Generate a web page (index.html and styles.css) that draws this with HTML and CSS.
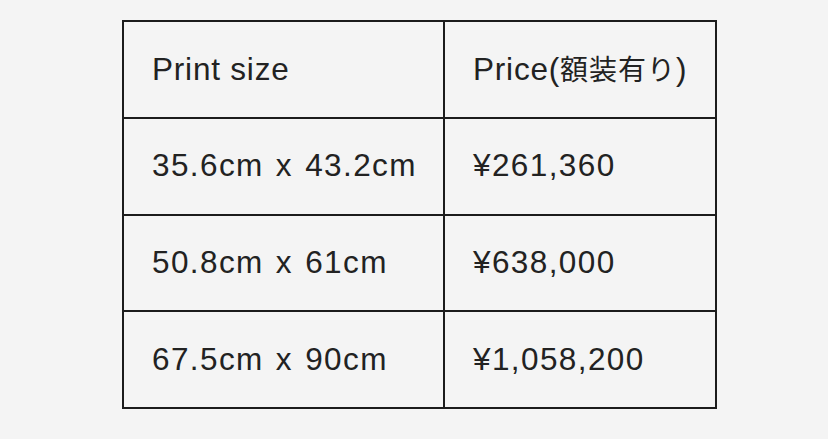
FILE: index.html
```html
<!DOCTYPE html>
<html lang="ja">
<head>
<meta charset="utf-8">
<title>Print sizes</title>
<link rel="stylesheet" href="styles.css">
</head>
<body>
<div class="wrap">
  <table class="price-table">
    <colgroup>
      <col class="col-size">
      <col class="col-price">
    </colgroup>
    <tbody>
      <tr class="head-row"><td>Print size</td><td>Price(<span class="ja">額装有り</span>)</td></tr>
      <tr><td>35.6cm x 43.2cm</td><td>¥261,360</td></tr>
      <tr><td>50.8cm x 61cm</td><td>¥638,000</td></tr>
      <tr><td>67.5cm x 90cm</td><td>¥1,058,200</td></tr>
    </tbody>
  </table>
</div>
</body>
</html>
```
FILE: styles.css
```css
html, body {
  margin: 0;
  padding: 0;
  background: #f4f4f4;
}
.wrap {
  padding: 20px 0 0 122px;
}
.price-table {
  border-collapse: collapse;
  table-layout: fixed;
  width: 593px;
  font-family: "Liberation Sans", "Noto Sans CJK JP", sans-serif;
  font-size: 31.5px;
  letter-spacing: 1.4px;
  word-spacing: 2px;
  color: #222;
}
.col-size { width: 321px; }
.col-price { width: 272px; }
.price-table td {
  border: 2px solid #1c1c1c;
  height: 96.75px;
  box-sizing: border-box;
  padding: 0 0 0 28px;
  vertical-align: middle;
  white-space: nowrap;
  line-height: 1;
}
.head-row td {
  letter-spacing: 0.8px;
  word-spacing: 0;
}
.ja {
  font-size: 28px;
  letter-spacing: 1px;
}
```
